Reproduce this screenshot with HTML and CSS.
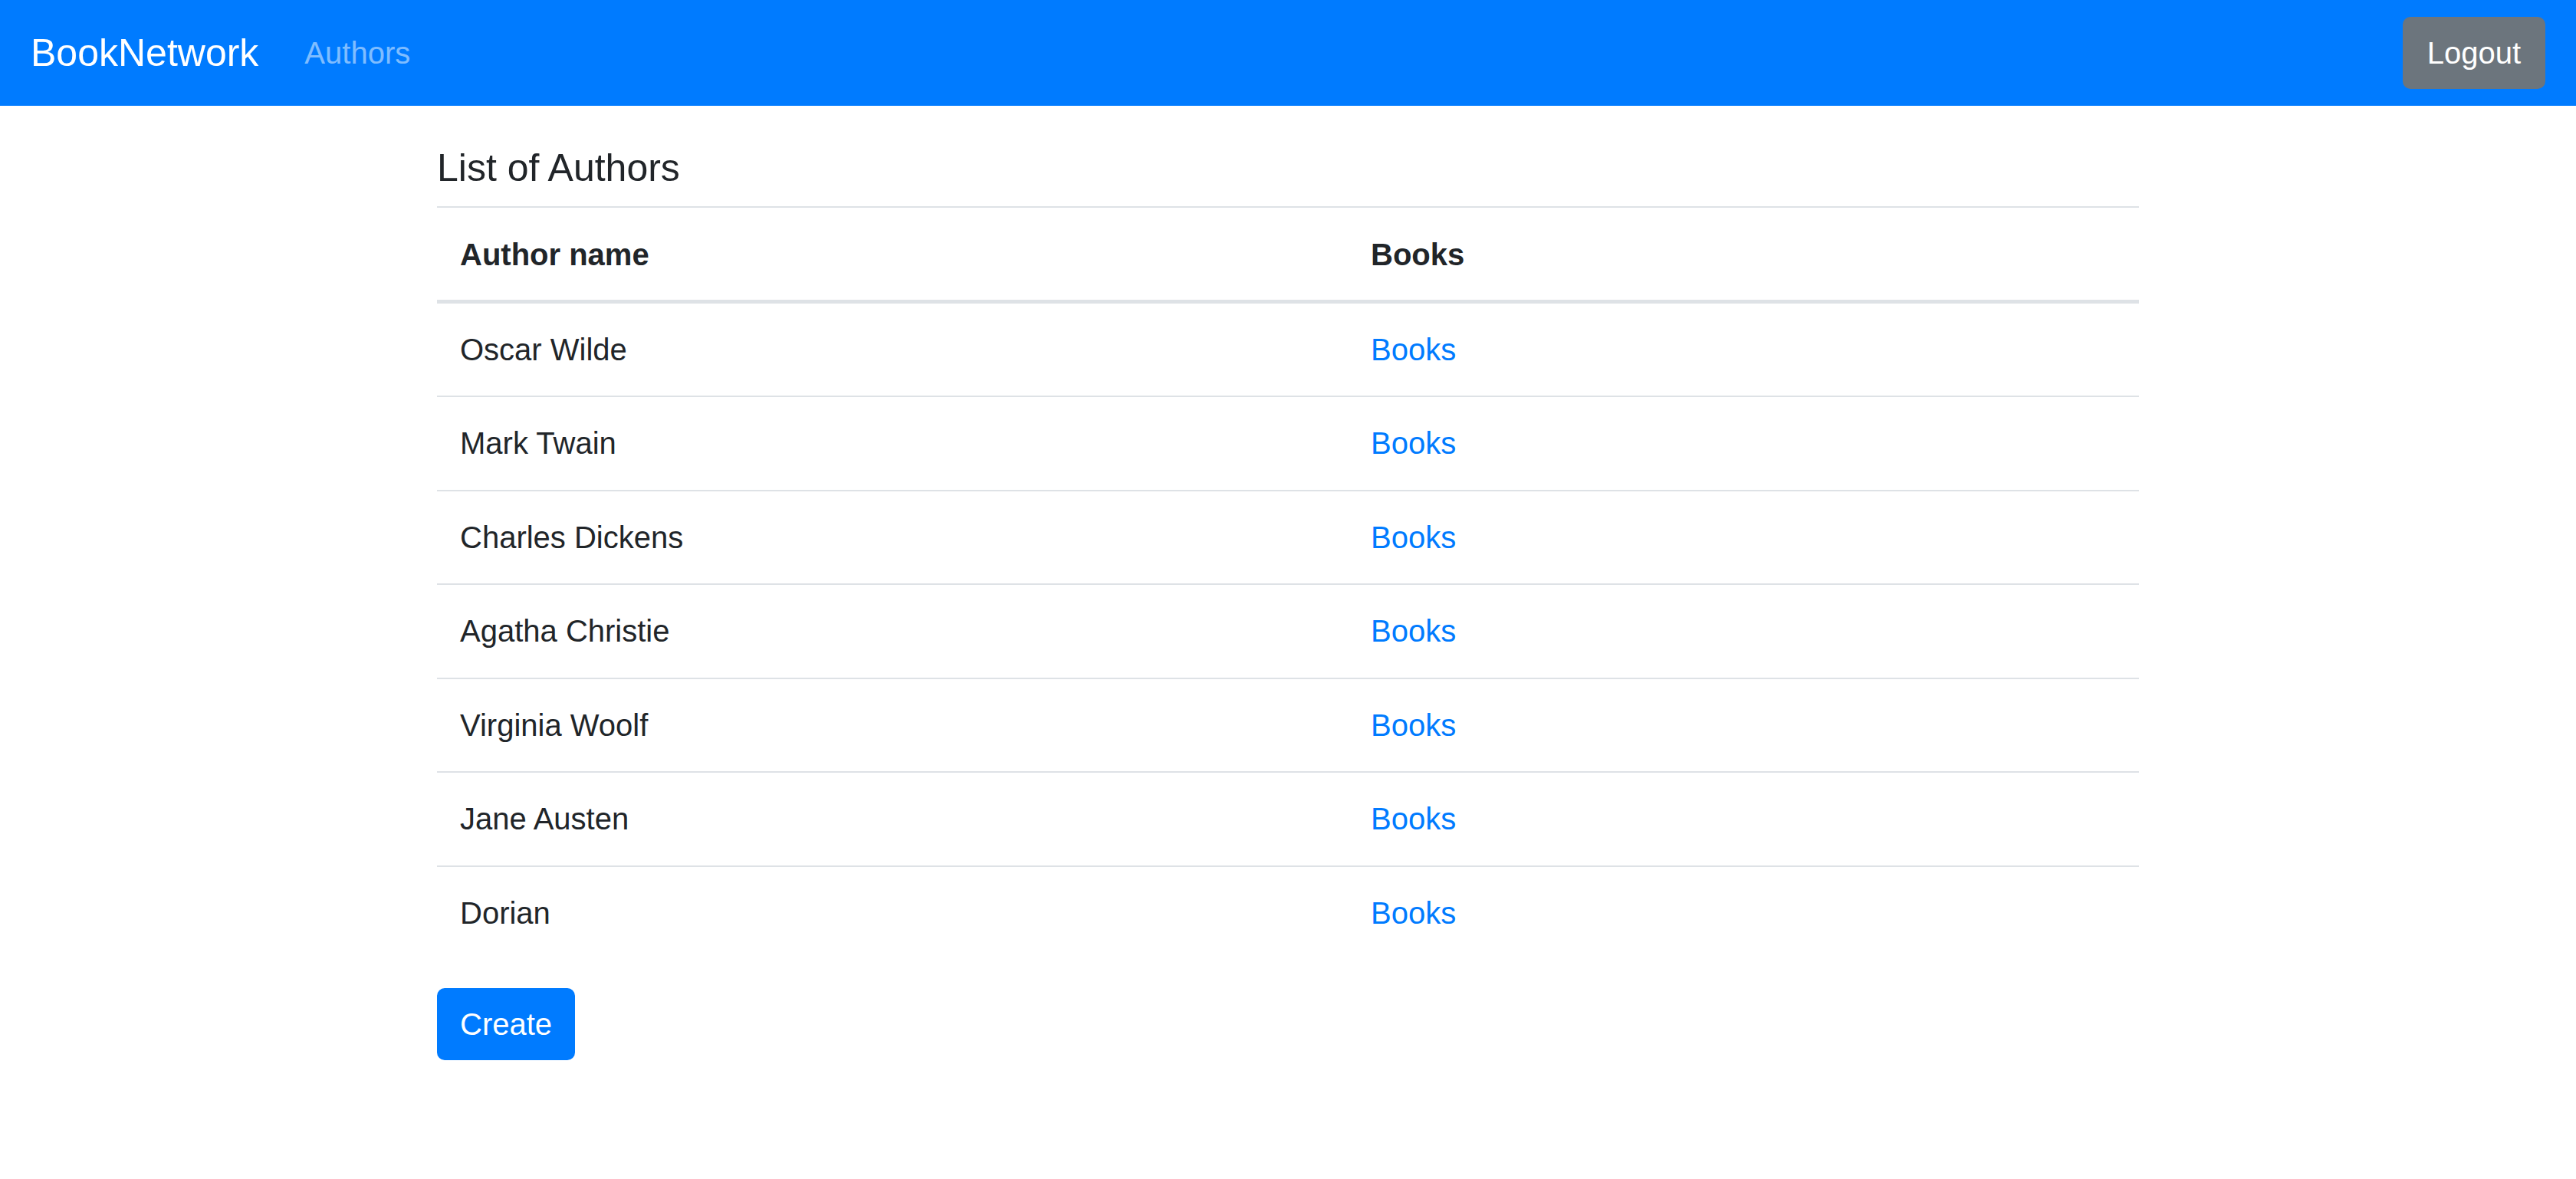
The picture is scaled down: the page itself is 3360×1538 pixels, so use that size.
FILE: index.html
```html
<!DOCTYPE html>
<html lang="en">
<head>
<meta charset="utf-8">
<title>BookNetwork</title>
<link rel="stylesheet" href="styles.css">
</head>
<body>
<nav class="navbar">
  <a class="brand" href="#">BookNetwork</a>
  <a class="nav-link" href="#">Authors</a>
  <button class="btn btn-secondary logout" type="button">Logout</button>
</nav>
<main class="container">
  <h5 class="title">List of Authors</h5>
  <table class="table">
    <colgroup><col class="col-name"><col></colgroup>
    <thead>
      <tr><th>Author name</th><th>Books</th></tr>
    </thead>
    <tbody>
      <tr><td>Oscar Wilde</td><td><a href="#">Books</a></td></tr>
      <tr><td>Mark Twain</td><td><a href="#">Books</a></td></tr>
      <tr><td>Charles Dickens</td><td><a href="#">Books</a></td></tr>
      <tr><td>Agatha Christie</td><td><a href="#">Books</a></td></tr>
      <tr><td>Virginia Woolf</td><td><a href="#">Books</a></td></tr>
      <tr><td>Jane Austen</td><td><a href="#">Books</a></td></tr>
      <tr><td>Dorian</td><td><a href="#">Books</a></td></tr>
    </tbody>
  </table>
  <button class="btn btn-primary" type="button">Create</button>
</main>
</body>
</html>
```

FILE: styles.css
```css
* { box-sizing: border-box; }

html, body {
  margin: 0;
  padding: 0;
  background: #fff;
}

body {
  font-family: "Liberation Sans", Arial, Helvetica, sans-serif;
  font-size: 40px;
  line-height: 1.5;
  color: #212529;
}

a { text-decoration: none; color: #007bff; }

.navbar {
  display: flex;
  align-items: center;
  height: 138px;
  padding: 0 40px;
  background: #007bff;
}

.brand {
  color: #fff;
  font-size: 50px;
  line-height: 75px;
  margin-right: 40px;
}

.nav-link {
  color: rgba(255, 255, 255, 0.5);
  padding: 20px;
  line-height: 60px;
}

.btn {
  font-family: inherit;
  font-size: 40px;
  line-height: 60px;
  padding: 15px 30px;
  border: 2px solid transparent;
  border-radius: 10px;
  color: #fff;
  cursor: pointer;
  height: 94px;
}

.btn-secondary {
  background: #6c757d;
  border-color: #6c757d;
}

.btn-primary {
  background: #007bff;
  border-color: #007bff;
  padding: 15px 28px;
}

.logout { margin-left: auto; }

.container {
  width: 2220px;
  margin: 0 auto;
  padding-top: 51px;
}

.title {
  margin: 0 0 20px;
  font-size: 50px;
  font-weight: 500;
  line-height: 60px;
}

.table {
  width: 100%;
  border-collapse: collapse;
  table-layout: fixed;
  margin-bottom: 38px;
}

.col-name { width: 1188px; }

.table th,
.table td {
  text-align: left;
  padding: 30px 30px 30.5px;
  line-height: 60px;
  border-top: 2px solid #dee2e6;
  vertical-align: top;
}

.table th {
  font-weight: bold;
  padding-top: 30.5px;
  padding-bottom: 29px;
}

.table thead th {
  border-bottom: 5px solid #dee2e6;
}

.table tbody tr:first-child td { border-top: 0; }
```
